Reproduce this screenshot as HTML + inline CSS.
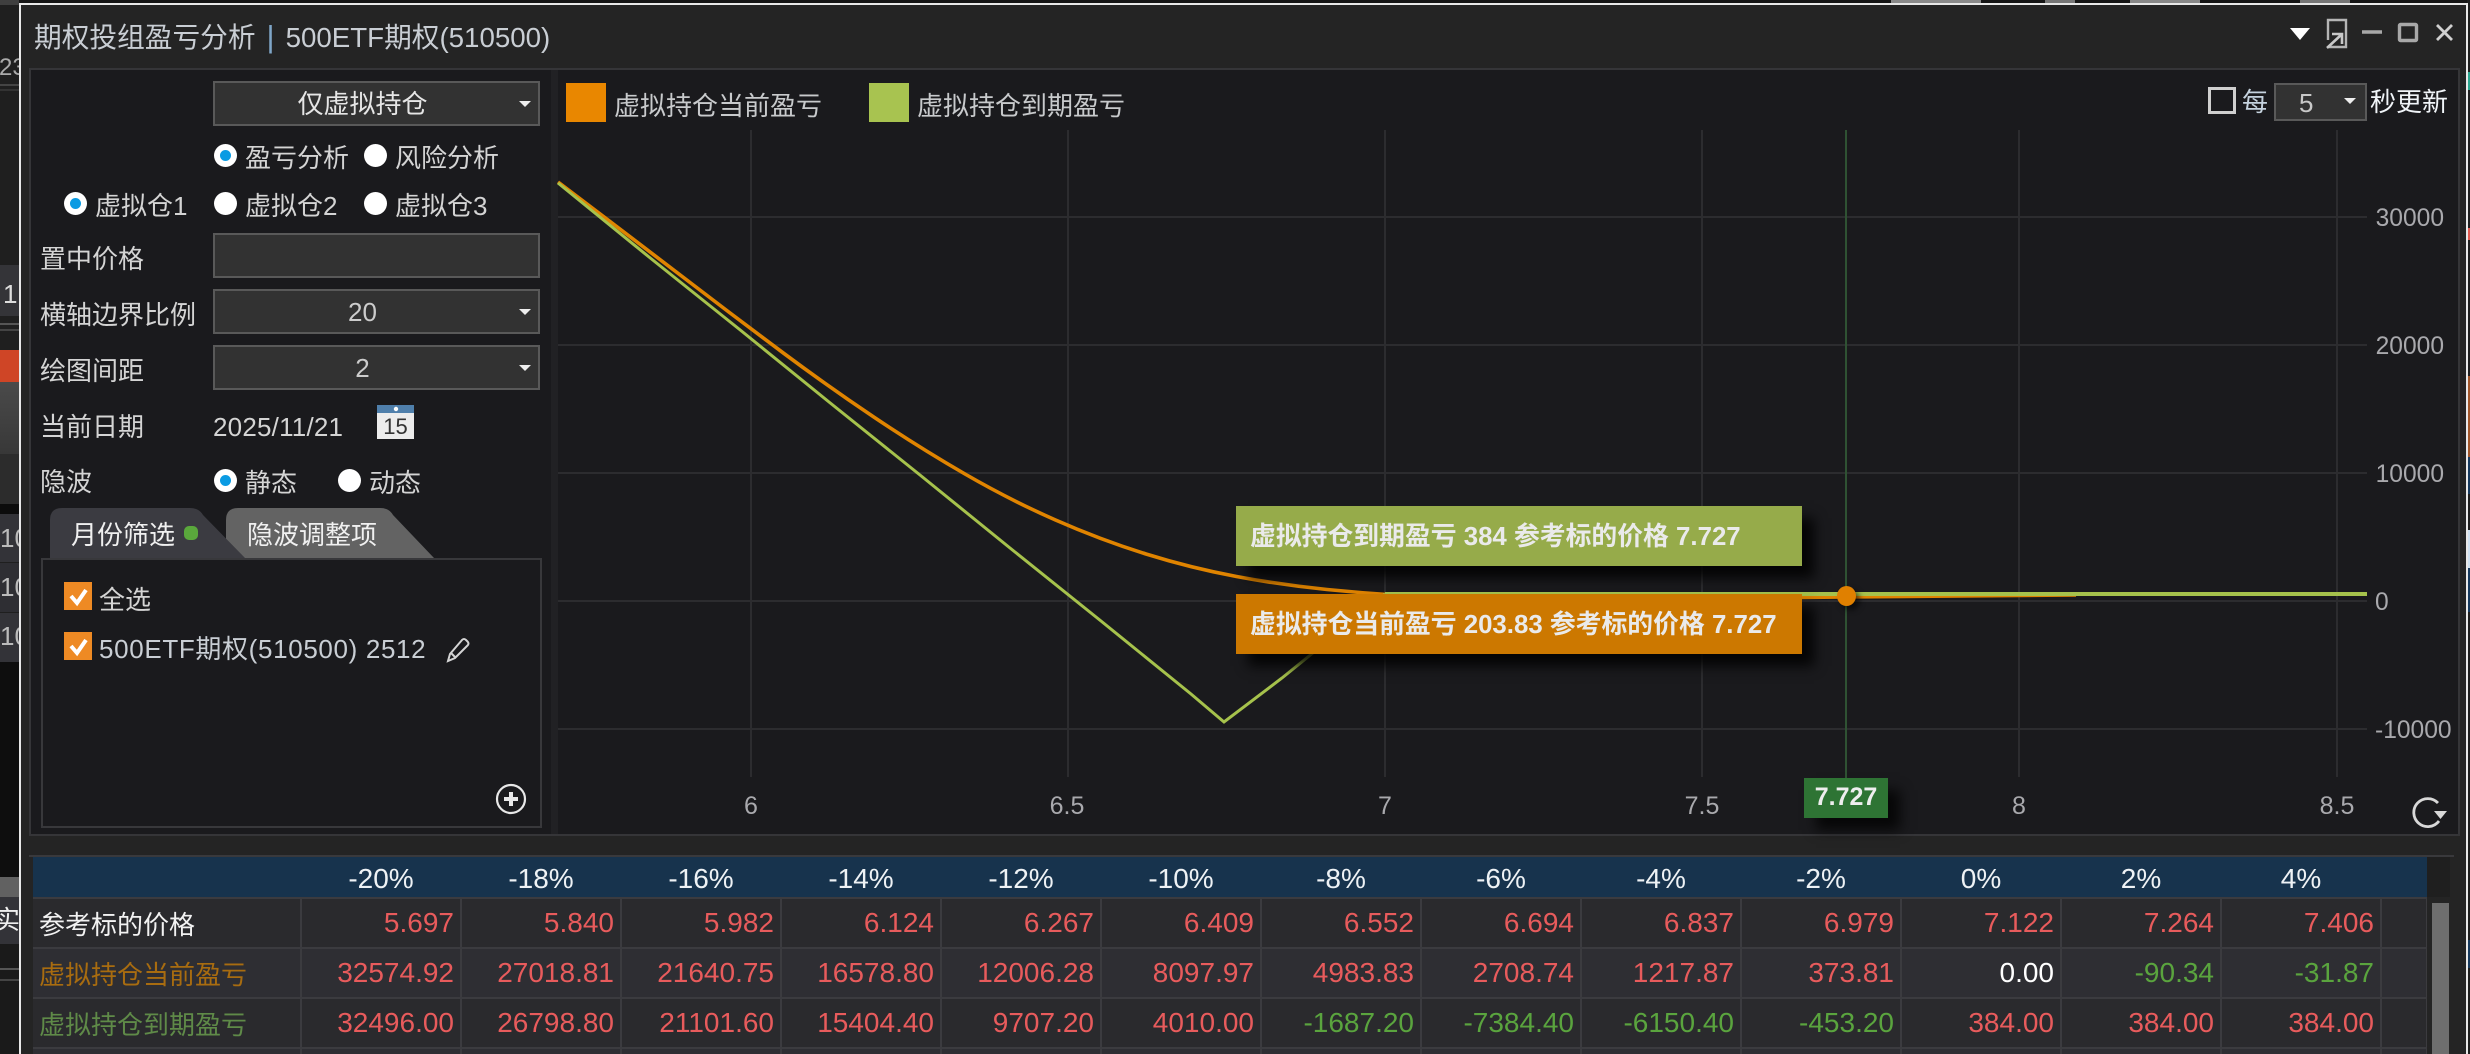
<!DOCTYPE html>
<html><head><meta charset="utf-8"><style>
html,body{margin:0;padding:0;width:2470px;height:1054px;overflow:hidden;background:#151515}
body{position:relative;font-family:"Liberation Sans","Noto Sans CJK SC",sans-serif;color:#d4d4d4;font-size:26px}
.a{position:absolute}
.t{position:absolute;height:40px;line-height:40px;white-space:nowrap;margin-top:1.5px}
.combo{position:absolute;left:213px;width:295px;background:#323232;border:2px solid #595959;text-align:center;height:41px;line-height:42px;padding-right:28px}
.combo i,.arrow{position:absolute;width:0;height:0;border-left:6px solid transparent;border-right:6px solid transparent;border-top:6px solid #eee}
.combo i{left:304px;top:18px}
.r{position:absolute;width:23px;height:23px;border-radius:50%;background:#fff}
.r.on:after{content:"";position:absolute;left:6px;top:6px;width:11px;height:11px;border-radius:50%;background:#0a9be3}
.cb{position:absolute;left:64px;width:28px;height:28px;background:#ee8a24}
.tt{position:absolute;left:1236px;width:566px;height:60px;box-shadow:12px 12px 12px rgba(0,0,0,.85);color:#eaeaea;font-weight:bold;line-height:60px;font-size:26px;white-space:nowrap;overflow:hidden;padding-left:14px;box-sizing:border-box}
.tt span{display:inline-block;transform-origin:left center;transform:scaleX(.993)}
.y{position:absolute;left:2375px;width:69px;text-align:right;height:30px;line-height:30px;font-size:24.6px;color:#a9a9ad;margin-top:1.5px}
.x{position:absolute;width:80px;text-align:center;top:786px;height:40px;line-height:40px;font-size:25px;color:#a9a9ad}
table{position:absolute;left:33px;top:857px;border-collapse:collapse;table-layout:fixed;width:2394px}
td,th{padding:0;font-weight:normal;white-space:nowrap;overflow:visible}
tr.h td{height:40px;background:#17334d;color:#eef2f5;font-size:28px;text-align:center;border:0;padding-top:0}
tr.h td span{position:relative;top:2px}
tr.b td{background:#2a2a2d;border:2px solid #3b3b3f;text-align:right;padding-right:6px;font-size:28px;color:#e85b5c;box-sizing:border-box;height:50px;border-left:2px solid #3b3b3f}
tr.b td:first-child{text-align:left;padding-left:6px;font-size:26px;border-left:0}
tr.b.z td{background:#2e2e33}
td.g{color:#5aa43e!important}td.w{color:#fff!important}
</style></head><body>

<!-- desktop fragments behind the window -->
<div class="a" style="left:0;top:0;width:19px;height:1054px;background:#1f1f1f"></div>
<div class="a" style="left:0;top:0;width:19px;height:5px;background:#3f3f3f"></div>
<div class="t" style="left:-1px;top:46px;font-size:24px;color:#aaa">23</div>
<div class="a" style="left:0;top:84px;width:19px;height:2px;background:#444"></div>
<div class="a" style="left:0;top:89px;width:19px;height:2px;background:#333"></div>
<div class="a" style="left:0;top:265px;width:19px;height:51px;background:#343438"></div>
<div class="t" style="left:3px;top:272px;font-size:26px;color:#ddd">1</div>
<div class="a" style="left:0;top:323px;width:19px;height:2px;background:#555"></div>
<div class="a" style="left:0;top:329px;width:19px;height:2px;background:#444"></div>
<div class="a" style="left:0;top:350px;width:19px;height:32px;background:#cf4526"></div>
<div class="a" style="left:0;top:382px;width:19px;height:72px;background:linear-gradient(#4a4a4a,#383838)"></div>
<div class="a" style="left:0;top:454px;width:19px;height:50px;background:#2c2c2c"></div>
<div class="a" style="left:0;top:504px;width:19px;height:10px;background:#0c0c0c"></div>
<div class="a" style="left:0;top:514px;width:19px;height:48px;background:#333338"></div>
<div class="a" style="left:0;top:563px;width:19px;height:49px;background:#2e2e33"></div>
<div class="a" style="left:0;top:613px;width:19px;height:49px;background:#333338"></div>
<div class="a" style="left:0;top:662px;width:19px;height:215px;background:#0e0e0e"></div>
<div class="a" style="left:0;top:514px;width:19px;height:148px;overflow:hidden;color:#bbb;font-size:26px;line-height:49px">10<br>10<br>10</div>
<div class="a" style="left:0;top:877px;width:19px;height:20px;background:#616161"></div>
<div class="a" style="left:0;top:897px;width:19px;height:47px;background:#333338;overflow:hidden"><span style="position:absolute;left:-6px;top:5px;color:#eee;line-height:36px;font-size:26px">实</span></div>
<div class="a" style="left:0;top:944px;width:19px;height:110px;background:#1a1a1a"></div>
<div class="a" style="left:0;top:968px;width:19px;height:2px;background:#555"></div>
<div class="a" style="left:0;top:979px;width:19px;height:2px;background:#444"></div>
<!-- right strip -->
<div class="a" style="left:2467px;top:0;width:3px;height:1054px;background:#1e1e1e"></div>
<div class="a" style="left:2467px;top:72px;width:3px;height:18px;background:#2ba58e"></div>
<div class="a" style="left:2467px;top:228px;width:3px;height:12px;background:#e25a50"></div>
<div class="a" style="left:2467px;top:376px;width:3px;height:81px;background:#a0562a"></div>
<div class="a" style="left:2467px;top:457px;width:3px;height:37px;background:#173a5e"></div>
<div class="a" style="left:2467px;top:530px;width:3px;height:38px;background:#cfe0f0"></div>
<div class="a" style="left:2467px;top:568px;width:3px;height:44px;background:#173a5e"></div>
<div class="a" style="left:2467px;top:940px;width:3px;height:28px;background:#173a5e"></div>
<!-- top strip fragments -->
<div class="a" style="left:1891px;top:0;width:90px;height:3px;background:#8a8a8a"></div>
<div class="a" style="left:2045px;top:0;width:30px;height:3px;background:#777"></div>
<div class="a" style="left:2130px;top:0;width:70px;height:3px;background:#888"></div>
<div class="a" style="left:2300px;top:0;width:50px;height:3px;background:#777"></div>

<!-- window -->
<div class="a" style="left:19px;top:3px;width:2445px;height:1051px;border:solid #e8e8e8;border-width:2px 2px 0 2px;background:#242424"></div>
<div class="t" style="left:34px;top:15.5px;font-size:27.7px;color:#c9ced4;letter-spacing:0">期权投组盈亏分析<span style="color:#7fa6c8;margin:0 11px 0 11px;font-size:31px">|</span>500ETF期权(510500)</div>

<!-- window controls -->
<svg class="a" style="left:2280px;top:10px" width="180" height="45" viewBox="2280 10 180 45">
<path d="M2290 28h20l-10 12z" fill="#fff"/>
<path d="M2328 40V20h18v27h-17" fill="none" stroke="#b5b5b5" stroke-width="2.4"/>
<path d="M2327 48l14-13M2332 34h10v10" fill="none" stroke="#c8c8c8" stroke-width="2.6"/>
<path d="M2362 32h20" stroke="#a8a8a8" stroke-width="3.4"/>
<rect x="2399.5" y="24.5" width="17" height="16" fill="none" stroke="#a8a8a8" stroke-width="3.4" rx="1"/>
<path d="M2437 25l15 15M2452 25l-15 15" stroke="#d0d0d0" stroke-width="2.8"/>
</svg>

<!-- main panel -->
<div class="a" style="left:29px;top:68px;width:2427px;height:764px;background:#1a1a1d;border:2px solid #353538;box-sizing:content-box"></div>
<div class="a" style="left:551px;top:70px;width:7px;height:764px;background:#212124"></div>

<!-- left controls -->
<div class="combo" style="top:81px;color:#e6e6e6">仅虚拟持仓<i></i></div>
<div class="r on" style="left:214px;top:144px"></div><div class="t" style="left:245px;top:136px">盈亏分析</div>
<div class="r" style="left:364px;top:144px"></div><div class="t" style="left:395px;top:136px">风险分析</div>
<div class="r on" style="left:64px;top:192px"></div><div class="t" style="left:95px;top:184px">虚拟仓1</div>
<div class="r" style="left:214px;top:192px"></div><div class="t" style="left:245px;top:184px">虚拟仓2</div>
<div class="r" style="left:364px;top:192px"></div><div class="t" style="left:395px;top:184px">虚拟仓3</div>
<div class="t" style="left:40px;top:237px">置中价格</div>
<div class="combo" style="top:233px"></div>
<div class="t" style="left:40px;top:293px">横轴边界比例</div>
<div class="combo" style="top:289px;color:#ccc">20<i></i></div>
<div class="t" style="left:40px;top:349px">绘图间距</div>
<div class="combo" style="top:345px;color:#ccc">2<i></i></div>
<div class="t" style="left:40px;top:405px">当前日期</div>
<div class="t" style="left:213px;top:405px;font-size:26px;letter-spacing:.2px">2025/11/21</div>
<svg class="a" style="left:377px;top:404px" width="38" height="36" viewBox="0 0 38 36">
<rect x="0" y="1" width="37" height="34" fill="#ececec"/><rect x="0" y="1" width="37" height="8" fill="#4f7fab"/>
<circle cx="19" cy="5" r="2.2" fill="#fff"/>
<text x="18.5" y="30" font-family="Liberation Sans,sans-serif" font-size="22" fill="#333" text-anchor="middle">15</text>
</svg>
<div class="t" style="left:40px;top:460px">隐波</div>
<div class="r on" style="left:214px;top:469px"></div><div class="t" style="left:245px;top:461px">静态</div>
<div class="r" style="left:338px;top:469px"></div><div class="t" style="left:369px;top:461px">动态</div>

<!-- tabs -->
<svg class="a" style="left:40px;top:505px" width="410" height="56" viewBox="40 505 410 56">
<path d="M226 558V520q0-12 12-12H380q9 0 13 7L434 558z" fill="#636363"/>
<path d="M50 558V520q0-12 12-12H190q9 0 13 7L245 558z" fill="#3b3b41"/>
</svg>
<div class="t" style="left:71px;top:513px;color:#f0f0f0">月份筛选</div>
<div class="a" style="left:184px;top:526px;width:14px;height:14px;border-radius:5px;background:#5aa83c"></div>
<div class="t" style="left:247px;top:513px;color:#f0f0f0">隐波调整项</div>

<!-- month box -->
<div class="a" style="left:41px;top:558px;width:497px;height:266px;border:2px solid #38383b;background:#1a1a1d"></div>
<div class="cb" style="top:582px"></div>
<svg class="a" style="left:64px;top:582px" width="28" height="28"><path d="M7 14l6 7 9-13" fill="none" stroke="#fff" stroke-width="4"/></svg>
<div class="t" style="left:99px;top:578px;color:#d4d4d4">全选</div>
<div class="cb" style="top:632px"></div>
<svg class="a" style="left:64px;top:632px" width="28" height="28"><path d="M7 14l6 7 9-13" fill="none" stroke="#fff" stroke-width="4"/></svg>
<div class="t" style="left:99px;top:627px;color:#c9ced4;font-size:26px;letter-spacing:.65px">500ETF期权(510500) 2512</div>
<svg class="a" style="left:444px;top:636px" width="28" height="28" viewBox="0 0 28 28">
<path d="M4 25l2-7L18 4q2-2 4 0l1.500 1.500q2 2 0 4L11 22z M7 17l5 5" fill="none" stroke="#d4d4d4" stroke-width="2"/>
</svg>
<svg class="a" style="left:495px;top:783px" width="32" height="32" viewBox="0 0 32 32">
<circle cx="16" cy="16" r="14" fill="none" stroke="#e8e8e8" stroke-width="2.2"/><path d="M16 9v14M9 16h14" stroke="#e8e8e8" stroke-width="4"/>
</svg>

<!-- legend -->
<div class="a" style="left:566px;top:83px;width:40px;height:39px;background:#e98700"></div>
<div class="t" style="left:614px;top:84px;color:#c8cacc">虚拟持仓当前盈亏</div>
<div class="a" style="left:869px;top:83px;width:40px;height:39px;background:#a8c350"></div>
<div class="t" style="left:917px;top:84px;color:#c8cacc">虚拟持仓到期盈亏</div>

<!-- refresh header controls -->
<div class="a" style="left:2208px;top:87px;width:22px;height:21px;border:3.5px solid #cfcfcf"></div>
<div class="t" style="left:2242px;top:80px;color:#c5d2de">每</div>
<div class="a" style="left:2274px;top:83px;width:89px;height:34px;background:#323232;border:2px solid #595959"></div>
<div class="t" style="left:2299px;top:81px;color:#c8c8c8">5</div>
<div class="arrow" style="left:2344px;top:98px"></div>
<div class="t" style="left:2370px;top:80px;color:#f0f4f8">秒更新</div>

<!-- chart -->
<svg class="a" style="left:0;top:0" width="2470" height="1054" viewBox="0 0 2470 1054">
<g stroke="#2c2c2f" stroke-width="2" fill="none">
<path d="M558 217H2367M558 345H2367M558 473H2367M558 601H2367M558 729H2367"/>
<path d="M751 130V777M1068 130V777M1385 130V777M1702 130V777M2019 130V777M2337 130V777"/>
</g>
<path d="M1846 130V778" stroke="#2f5233" stroke-width="2"/>
<path d="M558 182L603.500 216.500Q649 251 694 285.500Q739 320 784 353.500Q829 387 874.500 417.500Q920 448 965 474Q1010 500 1055.500 520Q1101 540 1146 554Q1191 568 1236.500 576.500Q1282 585 1327 589.500Q1372 594 1417 596.500Q1462 599 1507 599.500L1552 600L1643 599L1846 597L2076 595" fill="none" stroke="#e08400" stroke-width="3.6"/>
<path d="M558 183L649 257L739 329L829 402L920 475L1010 548L1101 621L1191 694L1224 722L1282 678L1372 605L1385 594" fill="none" stroke="#a6c24c" stroke-width="3"/>
<path d="M1385 594H2367" fill="none" stroke="#a6c24c" stroke-width="4"/>
</svg>

<div class="y" style="top:202px">30000</div>
<div class="y" style="top:330px">20000</div>
<div class="y" style="top:458px">10000</div>
<div class="y" style="top:586px;width:auto;left:2375px">0</div>
<div class="y" style="top:714px;left:2375px;width:79px;text-align:left">-10000</div>
<div class="x" style="left:711px">6</div>
<div class="x" style="left:1027px">6.5</div>
<div class="x" style="left:1345px">7</div>
<div class="x" style="left:1662px">7.5</div>
<div class="x" style="left:1979px">8</div>
<div class="x" style="left:2297px">8.5</div>

<svg class="a" style="left:2408px;top:794px" width="42" height="38" viewBox="0 0 42 38">
<path d="M30 9A14 14 0 1 0 31 27" fill="none" stroke="#d8d8d8" stroke-width="2.8"/><path d="M26 17h13l-6.500 8z" fill="#d8d8d8"/>
</svg>

<!-- tooltips -->
<div class="tt" style="top:506px;background:#96ab4a"><span>虚拟持仓到期盈亏 384 参考标的价格 7.727</span></div>
<div class="tt" style="top:594px;background:#cc7800"><span>虚拟持仓当前盈亏 203.83 参考标的价格 7.727</span></div>
<div class="a" style="left:1837px;top:586px;width:19px;height:20px;border-radius:50%;background:#e08000;box-shadow:4px 4px 6px rgba(0,0,0,.6)"></div>
<div class="a" style="left:1804px;top:778px;width:84px;height:40px;background:#2e7434;color:#eee;font-weight:bold;font-size:25px;line-height:38px;text-align:center;box-shadow:12px 12px 12px rgba(0,0,0,.75)">7.727</div>

<!-- table -->
<div class="a" style="left:2427px;top:857px;width:23px;height:40px;background:#1f1f1f"></div>
<div class="a" style="left:29px;top:855px;width:2425px;height:2px;background:#39393c"></div>
<div class="a" style="left:2432px;top:903px;width:17px;height:151px;background:#6e6e6e"></div>
<div class="a" style="left:33px;top:857px;width:2394px;height:197px;overflow:hidden">
<table style="left:0;top:0"><colgroup><col style="width:268px"><col span="13" style="width:160px"><col style="width:46px"></colgroup>
<tr class="h"><td></td><td><span>-20%</span></td><td><span>-18%</span></td><td><span>-16%</span></td><td><span>-14%</span></td><td><span>-12%</span></td><td><span>-10%</span></td><td><span>-8%</span></td><td><span>-6%</span></td><td><span>-4%</span></td><td><span>-2%</span></td><td><span>0%</span></td><td><span>2%</span></td><td><span>4%</span></td><td></td></tr>
<tr class="b"><td style="color:#f2f2f2">参考标的价格</td><td>5.697</td><td>5.840</td><td>5.982</td><td>6.124</td><td>6.267</td><td>6.409</td><td>6.552</td><td>6.694</td><td>6.837</td><td>6.979</td><td>7.122</td><td>7.264</td><td>7.406</td><td></td></tr>
<tr class="b z"><td style="color:#a86c10">虚拟持仓当前盈亏</td><td>32574.92</td><td>27018.81</td><td>21640.75</td><td>16578.80</td><td>12006.28</td><td>8097.97</td><td>4983.83</td><td>2708.74</td><td>1217.87</td><td>373.81</td><td class="w">0.00</td><td class="g">-90.34</td><td class="g">-31.87</td><td></td></tr>
<tr class="b"><td style="color:#5f8a48">虚拟持仓到期盈亏</td><td>32496.00</td><td>26798.80</td><td>21101.60</td><td>15404.40</td><td>9707.20</td><td>4010.00</td><td class="g">-1687.20</td><td class="g">-7384.40</td><td class="g">-6150.40</td><td class="g">-453.20</td><td>384.00</td><td>384.00</td><td>384.00</td><td></td></tr>
<tr class="b z"><td></td><td></td><td></td><td></td><td></td><td></td><td></td><td></td><td></td><td></td><td></td><td></td><td></td><td></td><td></td></tr>
</table></div>
</body></html>
